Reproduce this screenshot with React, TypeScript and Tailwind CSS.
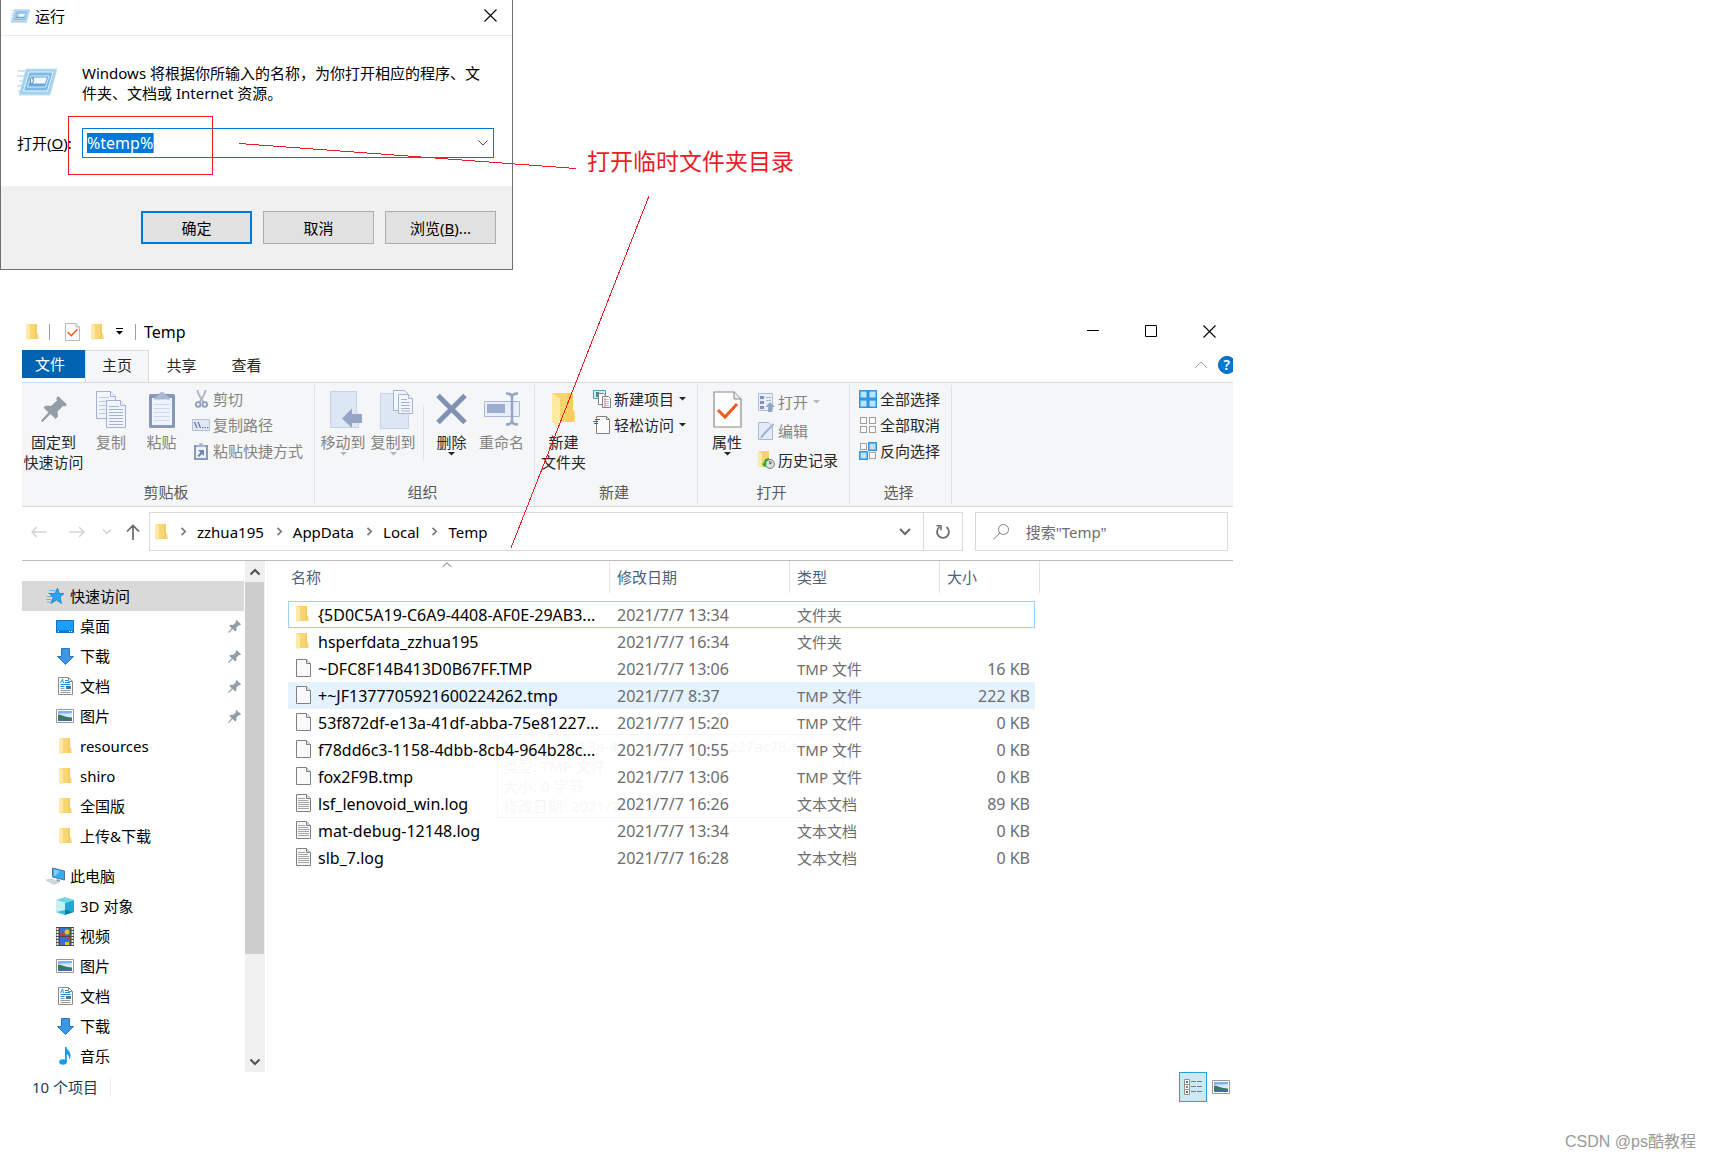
import React, { ReactNode } from "react";

const places = [
    { name: "桌面", icon: <DesktopIcon />, pinned: true },
    { name: "下载", icon: <DownloadIcon />, pinned: true },
    { name: "文档", icon: <DocumentIcon />, pinned: true },
    { name: "图片", icon: <PictureIcon />, pinned: true },
    { name: "resources", icon: <FolderIcon /> },
    { name: "shiro", icon: <FolderIcon /> },
    { name: "全国版", icon: <FolderIcon /> },
    { name: "上传&下载", icon: <FolderIcon /> },
];

const computer = [
    { name: "3D 对象", icon: <CubeIcon /> },
    { name: "视频", icon: <VideoIcon /> },
    { name: "图片", icon: <PictureIcon /> },
    { name: "文档", icon: <DocumentIcon /> },
    { name: "下载", icon: <DownloadIcon /> },
    { name: "音乐", icon: <MusicIcon /> },
];

const files = [
    { name: "{5D0C5A19-C6A9-4408-AF0E-29AB3...", date: "2021/7/7 13:34", type: "文件夹", size: "", kind: "folder", state: "focused" },
    { name: "hsperfdata_zzhua195", date: "2021/7/7 16:34", type: "文件夹", size: "", kind: "folder" },
    { name: "~DFC8F14B413D0B67FF.TMP", date: "2021/7/7 13:06", type: "TMP 文件", size: "16 KB", kind: "file" },
    { name: "+~JF1377705921600224262.tmp", date: "2021/7/7 8:37", type: "TMP 文件", size: "222 KB", kind: "file", state: "hover" },
    { name: "53f872df-e13a-41df-abba-75e81227...", date: "2021/7/7 15:20", type: "TMP 文件", size: "0 KB", kind: "file" },
    { name: "f78dd6c3-1158-4dbb-8cb4-964b28c...", date: "2021/7/7 10:55", type: "TMP 文件", size: "0 KB", kind: "file" },
    { name: "fox2F9B.tmp", date: "2021/7/7 13:06", type: "TMP 文件", size: "0 KB", kind: "file" },
    { name: "lsf_lenovoid_win.log", date: "2021/7/7 16:26", type: "文本文档", size: "89 KB", kind: "text" },
    { name: "mat-debug-12148.log", date: "2021/7/7 13:34", type: "文本文档", size: "0 KB", kind: "text" },
    { name: "slb_7.log", date: "2021/7/7 16:28", type: "文本文档", size: "0 KB", kind: "text" },
];

export default function App() {
    return (
        <div className="relative min-h-screen overflow-hidden bg-white font-['Noto_Sans','Noto_Sans_CJK_SC',sans-serif] text-[15px] leading-5 text-black">
            <RunDialog />
            <ExplorerWindow />
            <Annotations />
            <p className="absolute right-4 bottom-[6px] font-['Liberation_Sans','Noto_Sans_CJK_SC',sans-serif] text-base leading-5 text-[#999999]">
                CSDN @ps酷教程
            </p>
        </div>
    );
}

function RunDialog() {
    return (
        <section aria-label="运行" className="w-[513px] border-x border-b border-[#6f6f6f]">
            <header className="flex h-9 items-center border-b border-[#ebebeb] pr-[15px] pb-1 pl-[9px]">
                <RunIcon className="h-[14px] w-5" />
                <h1 className="ml-[5px]">运行</h1>
                <button aria-label="关闭" className="ml-auto">
                    <CloseIcon />
                </button>
            </header>
            <div className="px-4 pt-[27px] pb-7">
                <div className="flex gap-[25px] whitespace-nowrap">
                    <RunIcon className="mt-[5px] h-7 w-10" />
                    <p>
                        Windows 将根据你所输入的名称，为你打开相应的程序、文
                        <br />
                        件夹、文档或 Internet 资源。
                    </p>
                </div>
                <div className="mt-[25px] flex items-center">
                    <label htmlFor="command" className="w-[65px]">
                        打开(<u>O</u>):
                    </label>
                    <div className="flex h-[30px] w-[412px] items-center justify-between border border-[#0078d7] px-1">
                        <input
                            id="command"
                            defaultValue="%temp%"
                            className="field-sizing-content h-5 border-r border-[#ff8728] bg-[#0078d7] text-base leading-5 text-white outline-none"
                        />
                        <button aria-label="历史命令" className="px-px">
                            <svg width="10" height="6" viewBox="0 0 10 6" fill="none" stroke="#444">
                                <path d="M.5.5 5 5 9.5.5" />
                            </svg>
                        </button>
                    </div>
                </div>
            </div>
            <footer className="flex h-[83px] items-center justify-end gap-[11px] bg-[#f0f0f0] pr-4">
                <button className="h-[33px] w-[111px] border-2 border-[#0078d7] bg-[#e1e1e1]">确定</button>
                <button className="h-[33px] w-[111px] border border-[#adadad] bg-[#e1e1e1]">取消</button>
                <button className="h-[33px] w-[111px] border border-[#adadad] bg-[#e1e1e1]">
                    浏览(<u>B</u>)...
                </button>
            </footer>
        </section>
    );
}

function ExplorerWindow() {
    return (
        <main className="mt-[43px] w-[72%] overflow-hidden pl-[22px]">
            <TitleBar />
            <RibbonTabs />
            <Ribbon />
            <AddressBar />
            <div className="flex border-t border-[#bbbbbb]">
                <Sidebar />
                <FileList />
            </div>
            <footer className="flex h-[30px] items-center text-[#1e395b]">
                <p className="border-r border-[#f0f0f0] pr-3 pl-[10px]">10 个项目</p>
                <button aria-label="详细信息" className="ml-auto flex h-[30px] w-7 items-center justify-center border border-[#26a0da] bg-[#cce8f6]">
                    <DetailsIcon />
                </button>
                <button aria-label="大图标" className="mr-[3px] ml-[5px]">
                    <PictureIcon />
                </button>
            </footer>
        </main>
    );
}

function TitleBar() {
    return (
        <header className="flex h-[37px] items-center pr-[17px] pl-1 text-base">
            <FolderIcon />
            <span className="ml-[10px] h-4 w-px bg-[#a0a0a0]" />
            <button aria-label="属性" className="ml-[15px]">
                <CheckedPageIcon className="h-[18px] w-[15px]" />
            </button>
            <button aria-label="新建文件夹" className="ml-[11px]">
                <FolderIcon />
            </button>
            <button aria-label="自定义快速访问工具栏" className="ml-3">
                <svg width="7" height="7" viewBox="0 0 7 7">
                    <path d="M0 0h7v1H0zM0 3h7L3.5 6.5z" />
                </svg>
            </button>
            <span className="ml-3 h-4 w-px bg-[#a0a0a0]" />
            <h2 className="ml-2">Temp</h2>
            <div className="ml-auto flex items-center gap-[46px] pb-px">
                <button aria-label="最小化">
                    <svg width="12" height="12" viewBox="0 0 12 12">
                        <path d="M0 5h12v1H0z" />
                    </svg>
                </button>
                <button aria-label="最大化">
                    <svg width="12" height="12" viewBox="0 0 12 12" fill="none" stroke="#000">
                        <path d="M.5.5h11v11H.5z" />
                    </svg>
                </button>
                <button aria-label="关闭">
                    <CloseIcon />
                </button>
            </div>
        </header>
    );
}

function RibbonTabs() {
    return (
        <nav className="flex h-8 items-start text-[#262626]">
            <button className="h-7 w-[63px] bg-[#0063b1] pr-[7px] text-white">文件</button>
            <button className="z-10 h-8 w-16 border-x border-t border-[#dadbdc] bg-[#f5f6f7] pb-1">主页</button>
            <button className="h-[30px] w-[65px]">共享</button>
            <button className="h-[30px] w-[65px]">查看</button>
            <div className="ml-auto flex h-[30px] items-center gap-[10px]">
                <button aria-label="最小化功能区">
                    <svg width="14" height="8" viewBox="0 0 14 8" fill="none" stroke="#a0a0a0">
                        <path d="M1 7l6-6 6 6" />
                    </svg>
                </button>
                {/* the help button runs past the window edge */}
                <button aria-label="帮助" className="-mr-[3px] h-[18px] w-[18px] rounded-full border border-[#0a5ba6] bg-[#0078d7] text-sm leading-4 font-semibold text-white">
                    ?
                </button>
            </div>
        </nav>
    );
}

function Ribbon() {
    return (
        <div className="flex h-[125px] border-y border-[#dadbdc] bg-[#f5f6f7] whitespace-nowrap">
            <RibbonGroup title="剪贴板" className="w-[293px]">
                <LargeButton icon={<PinIcon className="h-[26px] w-[26px]" />} label={["固定到", "快速访问"]} className="w-[63px]" />
                <LargeButton icon={<CopyIcon />} label={["复制"]} className="w-[52px]" disabled />
                <LargeButton icon={<PasteIcon />} label={["粘贴"]} className="w-[49px]" disabled />
                <div className="ml-[5px]">
                    <SmallButton icon={<CutIcon />} label="剪切" disabled />
                    <SmallButton icon={<CopyPathIcon />} label="复制路径" disabled />
                    <SmallButton icon={<ShortcutIcon />} label="粘贴快捷方式" disabled />
                </div>
            </RibbonGroup>
            <RibbonGroup title="组织" className="w-[220px]">
                <LargeButton icon={<MoveToIcon />} label={["移动到"]} className="ml-[3px] w-[50px]" disabled arrow />
                <LargeButton icon={<CopyToIcon />} label={["复制到"]} className="w-[50px]" disabled arrow />
                <span className="mx-[5px] mt-[19px] h-[55px] w-px bg-[#e2e3e4]" />
                <LargeButton icon={<DeleteIcon />} label={["删除"]} className="w-[45px]" arrow />
                <LargeButton icon={<RenameIcon />} label={["重命名"]} className="w-[55px]" disabled />
            </RibbonGroup>
            <RibbonGroup title="新建" className="w-[163px]">
                <LargeButton icon={<NewFolderIcon />} label={["新建", "文件夹"]} className="w-[57px]" />
                <div>
                    <SmallButton icon={<NewItemIcon />} label="新建项目" arrow />
                    <SmallButton icon={<EasyAccessIcon />} label="轻松访问" arrow />
                </div>
            </RibbonGroup>
            <RibbonGroup title="打开" className="w-[152px]">
                <LargeButton icon={<CheckedPageIcon className="h-[37px] w-[29px]" />} label={["属性"]} className="w-[58px]" arrow />
                <div className="space-y-[3px] pt-[3px]">
                    <SmallButton icon={<OpenIcon />} label="打开" disabled arrow />
                    <SmallButton icon={<EditIcon />} label="编辑" disabled />
                    <SmallButton icon={<HistoryIcon />} label="历史记录" />
                </div>
            </RibbonGroup>
            <RibbonGroup title="选择" className="w-[102px]">
                <div className="ml-2">
                    <SmallButton icon={<SelectIcon on={[0, 1, 2, 3]} />} label="全部选择" />
                    <SmallButton icon={<SelectIcon on={[]} />} label="全部取消" />
                    <SmallButton icon={<SelectIcon on={[1, 2]} />} label="反向选择" />
                </div>
            </RibbonGroup>
        </div>
    );
}

interface RibbonGroupProps {
    title: string;
    className: string;
    children: ReactNode;
}

function RibbonGroup({ title, className, children }: RibbonGroupProps) {
    return (
        <section className={`my-[2px] flex shrink-0 flex-col border-r border-[#e2e3e4] pb-[2px] ${className}`}>
            <div className="flex flex-1 items-start pt-px">{children}</div>
            <h3 className="pr-1 text-center text-[#5a5a5a]">{title}</h3>
        </section>
    );
}

interface LargeButtonProps {
    icon: ReactNode;
    label: string[];
    className: string;
    disabled?: boolean;
    arrow?: boolean;
}

function LargeButton({ icon, label, className, disabled, arrow }: LargeButtonProps) {
    return (
        <button disabled={disabled} className={`flex flex-col items-center ${disabled ? "text-[#838383]" : "text-[#262626]"} ${className}`}>
            <span className="flex h-[46px] items-center">{icon}</span>
            {label.map((line) => (
                <span key={line}>{line}</span>
            ))}
            {arrow && <ArrowIcon disabled={disabled} />}
        </button>
    );
}

interface SmallButtonProps {
    icon: ReactNode;
    label: string;
    disabled?: boolean;
    arrow?: boolean;
}

function SmallButton({ icon, label, disabled, arrow }: SmallButtonProps) {
    return (
        <button disabled={disabled} className={`flex h-[26px] items-center ${disabled ? "text-[#838383]" : "text-[#262626]"}`}>
            <span className="mr-[2px] flex w-5 justify-center">{icon}</span>
            <span className="mr-[5px]">{label}</span>
            {arrow && <ArrowIcon disabled={disabled} />}
        </button>
    );
}

function AddressBar() {
    const path = ["zzhua195", "AppData", "Local", "Temp"];

    return (
        <div className="flex h-[53px] items-center pr-[5px] pb-1">
            <button aria-label="后退" className="ml-[9px]">
                <svg width="16" height="12" viewBox="0 0 16 12" fill="none" stroke="#d5d5d5" strokeWidth="1.5">
                    <path d="M15.5 6H1M6 1 1 6l5 5" />
                </svg>
            </button>
            <button aria-label="前进" className="ml-[22px]">
                <svg width="16" height="12" viewBox="0 0 16 12" fill="none" stroke="#d5d5d5" strokeWidth="1.5">
                    <path d="M0 6h14.5M10 1l5 5-5 5" />
                </svg>
            </button>
            <button aria-label="最近浏览的位置" className="ml-[17px]">
                <svg width="10" height="6" viewBox="0 0 10 6" fill="none" stroke="#d0d0d0" strokeWidth="1.5">
                    <path d="M1 .5l4 4 4-4" />
                </svg>
            </button>
            <button aria-label="上移" className="mr-[9px] ml-[14px]">
                <svg width="14" height="16" viewBox="0 0 14 16" fill="none" stroke="#666" strokeWidth="1.7">
                    <path d="M7 16V1.5M1 7.5l6-6 6 6" />
                </svg>
            </button>
            <div className="flex h-[39px] flex-1 border border-[#d9d9d9]">
                <nav className="flex flex-1 items-center pl-[5px]">
                    <FolderIcon />
                    {path.map((part) => (
                        <React.Fragment key={part}>
                            <ChevronIcon />
                            <a href={`#${part}`}>{part}</a>
                        </React.Fragment>
                    ))}
                    <button aria-label="以前的位置" className="mr-3 ml-auto">
                        <svg width="12" height="8" viewBox="0 0 12 8" fill="none" stroke="#6a6a6a" strokeWidth="2">
                            <path d="M1 1l5 5 5-5" />
                        </svg>
                    </button>
                </nav>
                <button aria-label="刷新" className="flex w-[39px] items-center justify-center border-l border-[#d9d9d9]">
                    <svg width="16" height="16" viewBox="0 0 16 16" fill="none" stroke="#6e6e6e" strokeWidth="1.8">
                        <path d="M11.5 3A6 6 0 1 1 4.5 3" />
                        <path d="M1.5 1.8h4.5v4.5" strokeWidth="1.6" />
                    </svg>
                </button>
            </div>
            <div className="ml-3 flex h-[39px] w-[253px] items-center border border-[#d9d9d9] pl-4">
                <svg width="18" height="18" viewBox="0 0 18 18" fill="none" stroke="#808080">
                    <circle cx="11.5" cy="6.5" r="5" />
                    <path d="M8 10 1 16.5" />
                </svg>
                <input aria-label="搜索" placeholder={'搜索"Temp"'} className="ml-4 w-[190px] outline-none placeholder:text-[#6d6d6d]" />
            </div>
        </div>
    );
}

function Sidebar() {
    return (
        <aside className="flex w-[246px] shrink-0 border-r border-[#f5f5f5]">
            <nav className="w-[223px] pt-5 pb-px">
                <a href="#quick" className="flex h-[30px] w-[222px] items-center bg-[#d9d9d9] pl-6">
                    <StarIcon />
                    <span className="ml-[5px]">快速访问</span>
                </a>
                {places.map((place) => (
                    <SidebarItem key={place.name} {...place} />
                ))}
                <a href="#computer" className="mt-[10px] flex h-[30px] items-center pl-6">
                    <ComputerIcon />
                    <span className="ml-[5px]">此电脑</span>
                </a>
                {computer.map((place) => (
                    <SidebarItem key={place.name} {...place} />
                ))}
            </nav>
            <div className="flex w-5 flex-col items-start bg-[#f0f0f0]">
                <button aria-label="向上滚动" className="flex h-[21px] w-[19px] items-center justify-center">
                    <svg width="12" height="8" viewBox="0 0 12 8" fill="none" stroke="#505050" strokeWidth="2">
                        <path d="M1.5 6.5 6 2l4.5 4.5" />
                    </svg>
                </button>
                <span className="h-[372px] w-[19px] bg-[#cdcdcd]" />
                <button aria-label="向下滚动" className="mt-auto flex h-[21px] w-[19px] items-center justify-center">
                    <svg width="12" height="8" viewBox="0 0 12 8" fill="none" stroke="#505050" strokeWidth="2">
                        <path d="M1.5 1.5 6 6l4.5-4.5" />
                    </svg>
                </button>
            </div>
        </aside>
    );
}

interface SidebarItemProps {
    name: string;
    icon: ReactNode;
    pinned?: boolean;
}

function SidebarItem({ name, icon, pinned }: SidebarItemProps) {
    return (
        <a href={`#${name}`} className="flex h-[30px] items-center pr-1 pl-[34px]">
            <span className="mr-[6px] flex w-[18px] justify-center">{icon}</span>
            {name}
            {pinned && <PinIcon className="ml-auto h-[13px] w-[13px]" />}
        </a>
    );
}

function FileList() {
    return (
        <div className="relative flex-1 pl-5">
            <table className="w-[747px] table-fixed border-separate border-spacing-0 text-left whitespace-nowrap">
                <colgroup>
                    <col className="w-[322px]" />
                    <col className="w-[180px]" />
                    <col className="w-[150px]" />
                    <col />
                </colgroup>
                <thead className="text-[#4c607a]">
                    <tr className="h-10 align-top">
                        <th className="p-0 font-normal">
                            <div className="flex h-8 items-center border-r border-[#e5e5e5] pl-[3px]">
                                名称
                                <svg className="mb-6 ml-[121px]" width="10" height="6" viewBox="0 0 10 6" fill="none" stroke="#707070">
                                    <path d="M.5 5 5 .8 9.5 5" />
                                </svg>
                            </div>
                        </th>
                        <th className="p-0 font-normal">
                            <div className="flex h-8 items-center border-r border-[#e5e5e5] pl-[7px]">修改日期</div>
                        </th>
                        <th className="p-0 font-normal">
                            <div className="flex h-8 items-center border-r border-[#e5e5e5] pl-[7px]">类型</div>
                        </th>
                        <th className="p-0 font-normal">
                            <div className="-mr-[5px] flex h-8 items-center border-r border-[#e5e5e5] pl-[7px]">大小</div>
                        </th>
                    </tr>
                </thead>
                <tbody className="text-[#6d6d6d]">
                    {files.map((file) => (
                        <tr key={file.name} className={file.state === "focused" ? "outline outline-1 -outline-offset-1 outline-[#99d1ff]" : file.state === "hover" ? "bg-[#e5f3ff]" : ""}>
                            <td className="h-[27px] p-0 text-base leading-5 text-black">
                                <span className="flex items-center pl-2">
                                    <span className="mr-[7px] w-[15px] pb-[2px]">
                                        {file.kind === "folder" ? <FolderIcon /> : <PageIcon lined={file.kind === "text"} />}
                                    </span>
                                    {file.name}
                                </span>
                            </td>
                            <td className="p-0 pl-[7px] text-base leading-5">{file.date}</td>
                            <td className="p-0 pl-[7px]">{file.type}</td>
                            <td className="p-0 pr-[5px] text-right text-base leading-5">{file.size}</td>
                        </tr>
                    ))}
                </tbody>
            </table>
            {/* file tooltip, nearly faded out */}
            <div className="pointer-events-none absolute top-[173px] left-[229px] h-[84px] w-[346px] border border-black px-[5px] py-px whitespace-nowrap opacity-[0.03]">
                <p>53f872df-e13a-41df-abba-75e81227ac78.tmp</p>
                <p>类型: TMP 文件</p>
                <p>大小: 0 字节</p>
                <p>修改日期: 2021/7/7 15:20</p>
            </div>
        </div>
    );
}

function Annotations() {
    return (
        <div className="pointer-events-none absolute inset-0 z-20">
            <div className="absolute top-[116px] left-[68px] h-[59px] w-[145px] border border-[#ed1c24]" />
            <svg className="absolute top-0 left-0" width="800" height="560" viewBox="0 0 800 560" stroke="#ed1c24" shapeRendering="crispEdges">
                <path d="M239 143.5 576 168.5M649 196 511 548" />
            </svg>
            <p className="absolute top-[145px] left-[587px] text-[23px] leading-8 text-[#ed1c24]">打开临时文件夹目录</p>
        </div>
    );
}

/* icons */

interface IconProps {
    className?: string;
}

function CloseIcon() {
    return (
        <svg width="13" height="13" viewBox="0 0 13 13" fill="none" stroke="#000" strokeWidth="1.1">
            <path d="m.5.5 12 12M12.5.5l-12 12" />
        </svg>
    );
}

function ArrowIcon({ disabled }: { disabled?: boolean }) {
    return (
        <svg width="7" height="4" viewBox="0 0 7 4" fill={disabled ? "#b5b5b5" : "#262626"}>
            <path d="M0 0h7L3.5 3.5z" />
        </svg>
    );
}

function ChevronIcon() {
    return (
        <svg className="mr-[10px] ml-3" width="7" height="9" viewBox="0 0 7 9" fill="none" stroke="#777" strokeWidth="1.7">
            <path d="m1.5.8 3.7 3.7-3.7 3.7" />
        </svg>
    );
}

function RunIcon({ className }: IconProps) {
    return (
        <svg className={className} viewBox="0 0 40 28">
            <path d="M1 3h10M0 8h9M2 13h6M0 18h6M1 23h4" stroke="#c3dcef" strokeWidth="1.5" />
            <path d="M9 1h31l-7 26H2z" fill="#a3d0ef" stroke="#c6e1f3" />
            <path d="M12 4h24l-5.5 19H6.5z" fill="#7db9e6" stroke="#eaf5fc" />
            <path d="M14 8h18l-3.5 11h-18z" fill="#69a8db" stroke="#d9ecf9" />
            <path d="M17 9.5h13l-2 6H15.500z" fill="#f1f8fe" />
            <ellipse cx="14.8" cy="12.5" rx="1.5" ry="3" fill="#fff" stroke="#5b87ad" />
        </svg>
    );
}

function FolderIcon() {
    return (
        <svg width="13" height="18" viewBox="0 0 13 18">
            <path d="M2 1h9v9l1.5 1.5V16H2z" fill="#f7d673" />
            <path d="M9 1h2v15H9z" fill="#f3cd63" />
            <path d="M0 1h2l2 2v12l-1 2.5L0 16z" fill="#ffe9a6" />
        </svg>
    );
}

function NewFolderIcon() {
    return (
        <svg width="26" height="38" viewBox="0 0 26 38">
            <path d="M2 3h20v17l2 2v10H2z" fill="#f8d470" />
            <path d="M16 3h6v29h-6z" fill="#f5cd62" />
            <path d="M1 3h1l7 6v22l-3 6-5-5z" fill="#ffe8a0" />
        </svg>
    );
}

function CheckedPageIcon({ className }: IconProps) {
    return (
        <svg className={className} viewBox="0 0 29 37" preserveAspectRatio="none">
            <path d="M1 1h20l7 7v28H1z" fill="#fcfcfc" stroke="#8c8c8c" strokeWidth="1.2" />
            <path d="M21 1v7h7" fill="#e8e8e8" stroke="#8c8c8c" />
            <path d="m5 19 7 7L24 13" fill="none" stroke="#f05a1a" strokeWidth="3" />
        </svg>
    );
}

function PageIcon({ lined }: { lined: boolean }) {
    return (
        <svg width="15" height="18" viewBox="0 0 15 18" fill="#f9f9f9" stroke="#808080">
            <path d="M.5.5h10l4 4v13H.5z" />
            <path d="M10.5.5v4h4" fill="#e2e2e2" />
            {lined && <path d="M2 4.5h7M2 6.5h10M2 8.5h11M2 10.5h11M2 12.5h11M2 14.5h11" stroke="#a5a5a5" />}
        </svg>
    );
}

function PinIcon({ className }: IconProps) {
    return (
        <svg className={className} viewBox="0 0 26 26" fill="#929da5">
            <path d="M17 0l9 8.5-2 2-2-.5-5.5 5.5.5 5-2.5 2.5-5-5L1.5 26 0 24.5 7.5 16.5l-5-5L5 9.5l5 .5L16 4.5l-.8-2z" />
        </svg>
    );
}

function CopyIcon() {
    return (
        <svg width="31" height="37" viewBox="0 0 31 37" fill="#f0f4fc" stroke="#a3b2cf">
            <path d="M.5.5h14l5 5v22H.5z" />
            <path d="M14.5.5v5h5" />
            <path d="M3 6.5h10M3 10.5h14M3 14.5h14M3 18.5h14M3 22.5h14" stroke="#bccbe6" />
            <path d="M10.5 9.5h14l5 5v22h-19z" />
            <path d="M24.5 9.5v5h5" />
            <path d="M13 15.5h10M13 18.5h14M13 21.5h14M13 24.5h14M13 27.5h14M13 30.5h14M13 33.5h14" stroke="#a3b2cf" />
        </svg>
    );
}

function PasteIcon() {
    return (
        <svg width="26" height="37" viewBox="0 0 26 37">
            <rect y="3" width="26" height="34" rx="1.5" fill="#8798ba" />
            <path d="M3 7h20v27H3z" fill="#eef3fc" />
            <path d="M5 13.5h16M5 17.5h16M5 21.5h16M5 25.5h16M5 29.5h16" stroke="#ccd9ef" />
            <path d="M5 8.5V7l4-3h1a3 3 0 0 1 6 0h1l4 3v1.5z" fill="#aab9d4" />
        </svg>
    );
}

function CutIcon() {
    return (
        <svg width="13" height="18" viewBox="0 0 13 18" fill="none" stroke="#8d9dbd" strokeWidth="1.8">
            <path d="M2.5 0C3 5 6 8 8.5 12.5M10.5 0C10 5 7 8 4.5 12.5" stroke="#a8b4cc" />
            <circle cx="3.2" cy="14.5" r="2.3" />
            <circle cx="9.8" cy="14.5" r="2.3" />
        </svg>
    );
}

function CopyPathIcon() {
    return (
        <svg width="18" height="12" viewBox="0 0 18 12">
            <path d="M.5.5h17v11H.5z" fill="#dfe8f7" stroke="#b3c0d8" />
            <path d="m2.5 3 2.5 6M6 3l2.5 6" stroke="#5d6f96" strokeWidth="1.2" />
            <path d="M10 8h1.2v1.2H10zM12.5 8h1.2v1.2h-1.2zM15 8h1.2v1.2H15z" fill="#5d6f96" />
        </svg>
    );
}

function ShortcutIcon() {
    return (
        <svg width="14" height="18" viewBox="0 0 14 18">
            <path d="M0 3h14v15H0z" fill="#8798ba" />
            <path d="M2 5h10v11H2z" fill="#edf2fb" />
            <path d="M3 5V3h2a2 2 0 0 1 4 0h2v2z" fill="#a5b3cf" />
            <path d="M4 8h6v6L8 12l-3 3-1.5-1.5L6.5 10.5z" fill="#7284ab" />
        </svg>
    );
}

/* the two "to" icons carry a blank left margin, their sheets sit right of the label's middle */
function MoveToIcon() {
    return (
        <svg width="38" height="37" viewBox="-6 0 38 37">
            <path d="M.5.5h26v20l2 2v14H.5z" fill="#dce6f5" stroke="#c5d3ea" />
            <path d="M32 23H22v-5.5L12 27.5l10 9.5v-5h10z" fill="#95a5c5" />
        </svg>
    );
}

function CopyToIcon() {
    return (
        <svg width="42" height="39" viewBox="-8 0 42 39">
            <path d="M.5 3.5h26v19l2 2v14H.5z" fill="#dce6f5" stroke="#c5d3ea" />
            <g fill="#f3f6fc" stroke="#a3b2cf">
                <path d="M13.5.5h11l4 4v16h-15z" />
                <path d="M18.5 4.5h10l4 4v15h-14z" />
                <path d="M28.5 4.5v4h4M21 9.5h6M21 12.5h9M21 15.5h9M21 18.5h9M21 21h9" />
            </g>
        </svg>
    );
}

function DeleteIcon() {
    return (
        <svg width="31" height="32" viewBox="0 0 31 32" stroke="#8091b5" strokeWidth="5">
            <path d="m2 2.5 27 27M29 2.5l-27 27" />
        </svg>
    );
}

function RenameIcon() {
    return (
        <svg width="36" height="34" viewBox="0 0 36 34" fill="none">
            <path d="M.5 9.5h35v15H.5z" fill="#e8effb" stroke="#a8b8d6" />
            <path d="M3 12h18v9H3z" fill="#9dadcd" />
            <path d="M22 1.5c4 0 6 1 6 4v23c0 3-2 4-6 4M34 1.5c-4 0-6 1-6 4v23c0 3 2 4 6 4" stroke="#95a5c5" strokeWidth="2.5" />
        </svg>
    );
}

function NewItemIcon() {
    return (
        <svg width="18" height="18" viewBox="0 0 18 18" fill="#fff">
            <path d="M.5.5h12v8H.5z" fill="#d5ecf7" stroke="#4b9cbd" />
            <path d="M3 2h3v5H3z" fill="#4a8c7a" />
            <path d="M5.5 3.5h5l2 2v9h-7z" stroke="#808080" />
            <path d="M9.5 6.5h6l2 2v9h-8z" stroke="#808080" />
            <path d="M11 9.5h5M11 11.5h5M11 13.5h5M11 15.5h5" stroke="#a9b9e0" />
            <path d="M12 8v9" stroke="#ef8a8a" />
        </svg>
    );
}

function EasyAccessIcon() {
    return (
        <svg width="18" height="18" viewBox="0 0 18 18">
            <path d="M3.5.5h10l3 3v14h-13z" fill="#fbfbfb" stroke="#808080" />
            <path d="M13.5.5v3h3" fill="none" stroke="#808080" />
            <path d="M2 3.5h5M0 5.5h5M1 7.5h4" stroke="#1f6fae" />
        </svg>
    );
}

function OpenIcon() {
    return (
        <svg width="17" height="19" viewBox="0 0 17 19">
            <path d="M.5.5h14v17H.5z" fill="#e9effa" stroke="#b0bed9" />
            <path d="M2 3h4v3H2zM2 8h4v3H2zM2 13h4v3H2z" fill="#8091b5" />
            <path d="M8 4.5h5M8 7.5h5" stroke="#a5b3cf" />
            <path d="M12 9 7.5 14H10v5h4v-5h3z" fill="#95a5c5" />
        </svg>
    );
}

function EditIcon() {
    return (
        <svg width="16" height="18" viewBox="0 0 16 18">
            <path d="M.5.5h10l4 4v13H.5z" fill="#e4ecf9" stroke="#a8b8d6" />
            <path d="M15.5 2 5 13l-2 3" fill="none" stroke="#a3b2cf" strokeWidth="2" />
        </svg>
    );
}

function HistoryIcon() {
    return (
        <svg width="17" height="18" viewBox="0 0 17 18">
            <path d="M1 0h10v16H1z" fill="#f7d36e" />
            <path d="M0 0h1l3 3v12l-1 2-3-2z" fill="#ffe9a6" />
            <circle cx="12" cy="13" r="4.5" fill="#dcdcdc" stroke="#7d7d7d" />
            <path d="M12 10v3l2-1.5" fill="none" stroke="#555" />
            <path d="M11 8c-3.5 0-4.5 2-4.5 6" fill="none" stroke="#2faa2f" strokeWidth="2" />
            <path d="m3.5 12.5 5 0-1.5 4z" fill="#2faa2f" />
        </svg>
    );
}

function SelectIcon({ on }: { on: number[] }) {
    return (
        <svg width="18" height="18" viewBox="0 0 18 18">
            {[0, 1, 2, 3].map((i) => {
                const active = on.includes(i);
                const x = (i % 2) * 9;
                const y = i > 1 ? 9 : 0;
                return active ? (
                    <rect key={i} x={x + 0.8} y={y + 0.8} width="7.5" height="7.5" fill="#bfe3fb" stroke="#2b92e0" strokeWidth="1.5" />
                ) : (
                    <rect key={i} x={x + 1.5} y={y + 1.5} width="6" height="6" fill="#fafafa" stroke="#a0a0a0" />
                );
            })}
        </svg>
    );
}

function StarIcon() {
    return (
        <svg width="19" height="16" viewBox="0 0 19 16">
            <path d="M3 2.5h6M2 5.5h4M1 8.5h5M0 11.5h5M1 14h4" stroke="#6bb5e6" />
            <path d="m11.5 0 1.8 5.5H18l-3.800 3.500 1.300 6.500-5-3.500-5.500 3.500 2-6L3.500 5.500h5.500z" fill="#27a4f2" stroke="#1f7fc0" strokeWidth=".8" />
        </svg>
    );
}

function DesktopIcon() {
    return (
        <svg width="18" height="13" viewBox="0 0 18 13">
            <path d="M.5.5h17v12H.5z" fill="#1a9fff" stroke="#1672b8" />
            <path d="M1 10.5h16v2H1z" fill="#1672b8" />
            <path d="M2 11h1v1H2zM13 11h1v1h-1zM15 11h1v1h-1z" fill="#fff" />
        </svg>
    );
}

function DownloadIcon() {
    return (
        <svg width="17" height="17" viewBox="0 0 17 17">
            <path d="M4.5.5h8v8h4l-8 8-8-8h4z" fill="#3b97e6" stroke="#2a76bd" />
        </svg>
    );
}

function DocumentIcon() {
    return (
        <svg width="15" height="18" viewBox="0 0 15 18">
            <path d="M.5.5h10l4 4v13H.5z" fill="#fff" stroke="#8a8a8a" />
            <path d="M10.5.5v4h4" fill="none" stroke="#8a8a8a" />
            <path d="m2.5 6 2-4 1 4M7 3.5h3M7 5.5h5M2.5 7.5h10M2.5 9.5h4" fill="none" stroke="#1f93dc" />
            <path d="M8 9h5v3H8z" fill="#3f7c99" />
            <path d="M2.5 11.5h4M2.5 13.5h10M2.5 15.5h10" stroke="#9a9a9a" />
        </svg>
    );
}

function PictureIcon() {
    return (
        <svg width="18" height="14" viewBox="0 0 18 14">
            <path d="M.5.5h17v13H.5z" fill="#fff" stroke="#999" />
            <path d="M2 2h14v10H2z" fill="#7db3f5" />
            <path d="M2 5c5-1 8 0 14-1v5H2z" fill="#d5eafa" />
            <path d="M2 5.5c4 0 7 3 14 3V10H2z" fill="#3f7a55" />
            <path d="M2 9.5h14V12H2z" fill="#3c6f9f" />
        </svg>
    );
}

function ComputerIcon() {
    return (
        <svg width="19" height="18" viewBox="0 0 19 18">
            <path d="m6.5 1 12 3v9l-12-3z" fill="#35adf5" stroke="#57768c" />
            <path d="m8 2.5 6 1.5-5 5-1-.3z" fill="#7fd0ff" />
            <path d="m11 12 3 1v2l-4-1z" fill="#9aa5ad" />
            <path d="m0 13 6-1 7 3.5-5 2z" fill="#d3d8dc" stroke="#b3bac0" strokeWidth=".5" />
        </svg>
    );
}

function CubeIcon() {
    return (
        <svg width="18" height="18" viewBox="0 0 18 18">
            <path d="m9 0 9 3-9 3-9-3z" fill="#6fd6e4" />
            <path d="m0 3 9 3v8l-9 1z" fill="#c5f1f4" />
            <path d="m18 3-9 3v8l9 1z" fill="#1ea7d8" />
            <path d="m0 15 9-2v5z" fill="#38bfd3" />
            <path d="m18 15-9-2v5z" fill="#0d7f9f" />
        </svg>
    );
}

function VideoIcon() {
    return (
        <svg width="18" height="19" viewBox="0 0 18 19">
            <path d="M0 0h18v19H0z" fill="#4a4a4a" />
            <path d="M1.5 1v18M16.5 1v18" stroke="#eee" strokeWidth="2" strokeDasharray="2 1" />
            <path d="M4 1h10v8H4zM4 10h10v8H4z" fill="#3a6fd0" />
            <path d="M4 6h5v3H4z" fill="#c9402e" />
            <circle cx="11" cy="5" r="2.5" fill="#e2c42c" />
            <path d="M9 15h4v3H9z" fill="#e2c42c" />
            <path d="M11 10h2v3h-2z" fill="#c9402e" />
        </svg>
    );
}

function MusicIcon() {
    return (
        <svg width="12" height="18" viewBox="0 0 12 18" fill="#0f9bf2">
            <ellipse cx="4" cy="15" rx="3.8" ry="2.8" />
            <path d="M6 0h1.5c0 3 4 4 4 8 0 2-.5 3-1.5 4.5.3-3-.5-4.5-2.2-5.5V15H6z" />
        </svg>
    );
}

function DetailsIcon() {
    return (
        <svg width="18" height="17" viewBox="0 0 18 17">
            <path d="M.5.5h5v5h-5zM.5 5.5h5v5h-5zM.5 10.5h5v5h-5z" fill="#fff" stroke="#909090" />
            <path d="M2 2h2v2H2z" fill="#3b86c9" />
            <path d="M2 7h2v2H2z" fill="#7b8f3c" />
            <path d="M2 12h2v2H2z" fill="#c8442e" />
            <path d="M7 2.5h5M13 2.5h5M7 7.5h5M13 7.5h5M7 12.5h5M13 12.5h5" stroke="#7a7a7a" />
        </svg>
    );
}
